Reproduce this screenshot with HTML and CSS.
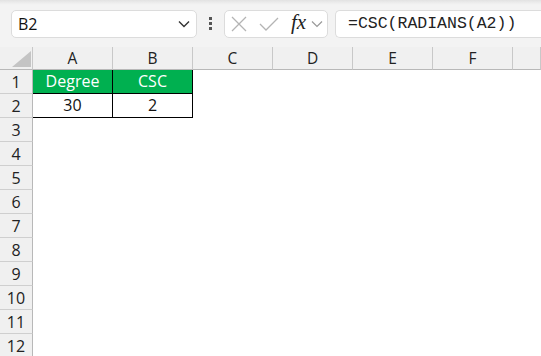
FILE: index.html
```html
<!DOCTYPE html>
<html lang="en">
    <head>
        <meta charset="utf-8"/>
        <title>CSC formula</title>
        <link rel="stylesheet" href="styles.css">
    </head>
    <body>
        <div class="toolbar">
            <div class="nameBox">
                <span>B2</span>
                <svg class="chev" width="12" height="8" viewBox="0 0 12 8"><path d="M1 1.5 L6 6.5 L11 1.5" fill="none" stroke="#333" stroke-width="1.4"/></svg>
            </div>
            <div class="dots"><i></i><i></i><i></i></div>
            <div class="fxBox">
                <svg width="18" height="16" viewBox="0 0 18 16"><path d="M2 1 L16 15 M16 1 L2 15" stroke="#b4b4b4" stroke-width="1.3" fill="none"/></svg>
                <svg width="20" height="16" viewBox="0 0 20 16"><path d="M1 8 L7 14 L19 2" stroke="#b4b4b4" stroke-width="1.3" fill="none"/></svg>
                <span class="fx">fx</span>
                <svg width="12" height="8" viewBox="0 0 12 8"><path d="M1 1.5 L6 6.5 L11 1.5" fill="none" stroke="#999" stroke-width="1.2"/></svg>
            </div>
            <div class="formula">=CSC(RADIANS(A2))</div>
        </div>

        <div class="sheet">
            <div class="corner"><svg width="19" height="16" viewBox="0 0 19 16"><polygon points="19,0 19,16 0,16" fill="#c4c4c4"/></svg></div>
            <div class="colHead">A</div>
            <div class="colHead">B</div>
            <div class="colHead">C</div>
            <div class="colHead">D</div>
            <div class="colHead">E</div>
            <div class="colHead">F</div>
            <div class="colHead"></div>

            <div class="rowHead">1</div>
            <div class="cell head">Degree</div>
            <div class="cell head">CSC</div>
            <div></div><div></div><div></div><div></div><div></div>

            <div class="rowHead">2</div>
            <div class="cell">30</div>
            <div class="cell">2</div>
            <div></div><div></div><div></div><div></div><div></div>

            <div class="rowHead">3</div><div class="blank"></div>
            <div class="rowHead">4</div><div class="blank"></div>
            <div class="rowHead">5</div><div class="blank"></div>
            <div class="rowHead">6</div><div class="blank"></div>
            <div class="rowHead">7</div><div class="blank"></div>
            <div class="rowHead">8</div><div class="blank"></div>
            <div class="rowHead">9</div><div class="blank"></div>
            <div class="rowHead">10</div><div class="blank"></div>
            <div class="rowHead">11</div><div class="blank"></div>
            <div class="rowHead">12</div><div class="blank"></div>
        </div>
    </body>
</html>
```

FILE: styles.css
```css
body {
    margin: 0;
    background: white;
    font-family: "Open Sans", "Noto Sans", sans-serif;
    overflow: hidden;
}

.toolbar {
    height: 47px;
    box-sizing: border-box;
    padding: 10px 0 0 11px;
    background: linear-gradient(#e2e2e2 0, #f1f1f1 4px, #f3f3f3 5px);
    display: flex;
    align-items: flex-start;
    white-space: nowrap;
}

.nameBox {
    width: 186px;
    height: 28px;
    box-sizing: border-box;
    background: white;
    border: 1px solid #dcdcdc;
    border-radius: 5px;
    display: flex;
    align-items: center;
    justify-content: space-between;
    padding: 0 6px 0 6px;
    font-size: 16px;
    color: #111;
}

.dots {
    width: 27px;
    display: flex;
    flex-direction: column;
    align-items: center;
    gap: 2px;
    padding-top: 7px;
}

.dots i {
    width: 3px;
    height: 3px;
    background: #555;
}

.fxBox {
    width: 104px;
    height: 28px;
    box-sizing: border-box;
    background: white;
    border: 1px solid #dcdcdc;
    border-radius: 5px;
    display: flex;
    align-items: center;
    padding: 0 0 0 5px;
}

.fxBox svg:nth-child(1) { margin-right: 11px; }
.fxBox svg:nth-child(2) { margin-right: 12px; }

.fx {
    font-family: "Liberation Serif", serif;
    font-style: italic;
    font-size: 21px;
    color: #222;
    margin-right: 5px;
    line-height: 1;
    margin-top: -3px;
}

.formula {
    margin-left: 7px;
    flex: 1;
    height: 28px;
    box-sizing: border-box;
    background: white;
    border: 1px solid #dcdcdc;
    border-right: none;
    border-radius: 5px 0 0 5px;
    padding: 0 0 0 12px;
    font-family: "Liberation Mono", monospace;
    font-size: 16.5px;
    line-height: 26px;
    color: #222;
}

.sheet {
    display: grid;
    grid-template-columns: 33px repeat(6, 80px) 1fr;
    grid-template-rows: 23px;
    grid-auto-rows: 24px;
    font-size: 15.5px;
}

.corner {
    background: #f0f0f0;
    border-right: 1px solid #c8c8c8;
    border-bottom: 1px solid #b8b8b8;
    display: flex;
    align-items: flex-end;
    justify-content: flex-end;
    padding: 0 1px 2px 0;
}

.colHead {
    background: #f0f0f0;
    border-right: 1px solid #c8c8c8;
    border-bottom: 1px solid #b8b8b8;
    text-align: center;
    line-height: 22px;
    color: #222;
}

.rowHead {
    background: #f0f0f0;
    border-right: 1px solid #b8b8b8;
    border-bottom: 1px solid #cfcfcf;
    text-align: center;
    line-height: 24px;
    color: #222;
    font-size: 16px;
}

.blank {
    grid-column: 2 / -1;
}

.cell {
    border-right: 1px solid black;
    border-bottom: 1px solid black;
    text-align: center;
    line-height: 23px;
    font-size: 16px;
    color: #111;
}

.cell.head {
    background: #00b050;
    color: white;
}

.corner, .colHead, .rowHead, .cell {
    box-sizing: border-box;
}
```
